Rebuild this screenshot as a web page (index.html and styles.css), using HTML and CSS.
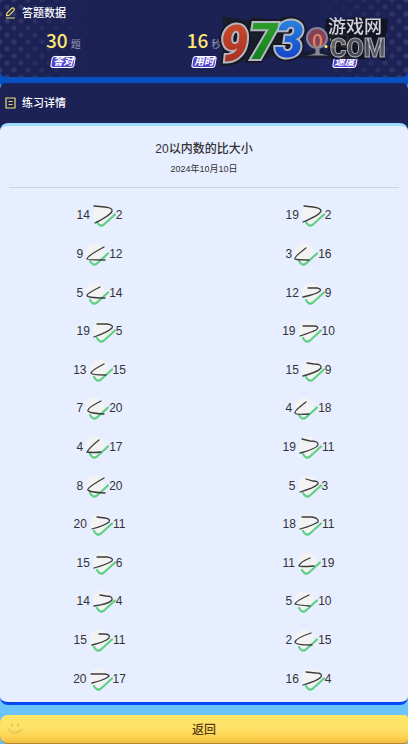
FILE: index.html
```html
<!DOCTYPE html>
<html lang="zh-CN">
<head>
<meta charset="utf-8">
<meta name="viewport" content="width=device-width, initial-scale=1">
<title>练习详情</title>
<link rel="stylesheet" href="styles.css">
</head>
<body>
<svg class="defs" aria-hidden="true">
  <defs>
    <g id="mark">
      <circle cx="12" cy="12" r="9.5" fill="#f3f3f3" stroke="none"/>
      <path d="M7 20 Q10 25.500 14 22.500 L25 12.500" fill="none" stroke="#5fd083" stroke-width="2.200" stroke-linecap="round"/>
    </g>
  </defs>
</svg>

<section class="panel summary">
  <h2 class="heading">
    <svg class="heading-icon" viewBox="0 0 12 12" aria-hidden="true"><path d="M1.500 8.500 L2 6 L7 1 Q8 .5 9 1.500 Q9.700 2.500 9 3.300 L4 8.300 Z M1 11 H10"/></svg>
    答题数据
  </h2>
  <div class="stats">
    <div class="stat"><p class="value">30<span class="unit">题</span></p><span class="badge">答对</span></div>
    <div class="stat"><p class="value">16<span class="unit">秒</span></p><span class="badge">用时</span></div>
    <div class="stat"><p class="value">0.53<span class="unit">秒/题</span></p><span class="badge">速度</span></div>
  </div>
  <svg class="logo" viewBox="0 0 174 58" role="img" aria-label="973游戏网">
    <defs>
      <linearGradient id="red" x1="0" y1="0" x2="0" y2="1"><stop offset="0" stop-color="#e2552c"/><stop offset="1" stop-color="#b02a16"/></linearGradient>
      <linearGradient id="green" x1="0" y1="0" x2="0" y2="1"><stop offset="0" stop-color="#35b52c"/><stop offset="1" stop-color="#078212"/></linearGradient>
      <linearGradient id="blue" x1="0" y1="0" x2="0" y2="1"><stop offset="0" stop-color="#2fa0f0"/><stop offset="1" stop-color="#0c35d0"/></linearGradient>
      <linearGradient id="steel" x1="0" y1="0" x2="1" y2="1"><stop offset="0" stop-color="#77777c"/><stop offset=".5" stop-color="#46464c"/><stop offset="1" stop-color="#77777c"/></linearGradient>
    </defs>
    <path d="M5 4 L30 8 L38 5 L60 8 L66 5 L86 9 L88 20 L83 38 L64 48 L56 43 L36 52 L30 46 L26 50 L12 54 L10 44 Z" fill="#1a1d28"/>
    <path d="M76 46 L86 39 H95 V34 H106 V39 L116 43 V47 Z" fill="#15171f" opacity=".6"/>
    <path d="M109 6 L118 8 L140 5 L171 7 L169 24 L168 49 L154 43 L150 47 L116 47 L111 38 L114 27 L108 23 Z" fill="#11131c"/>
    <g class="digits">
      <g class="digit-edge"><text x="3" y="49">9</text><text x="32" y="47">7</text><text x="58" y="45">3</text></g>
      <g class="digit-rim"><text x="3" y="49">9</text><text x="32" y="47">7</text><text x="58" y="45">3</text></g>
      <text x="3" y="49" fill="url(#red)">9</text><text x="32" y="47" fill="url(#green)">7</text><text x="58" y="45" fill="url(#blue)">3</text>
    </g>
    <path d="M98 36 V41 L88 44 H114 L103 41 V36 Z" fill="#92949c" stroke="#222530"/>
    <circle cx="100" cy="26" r="10" fill="#c8505a" fill-opacity=".7" stroke="#8d909c" stroke-width="2"/>
    <text class="site" x="111" y="21">游戏网</text>
    <text class="domain" x="113" y="45">COM</text>
  </svg>
</section>

<section class="panel details">
  <h2 class="heading">
    <svg class="heading-icon" viewBox="0 0 12 12" aria-hidden="true"><path d="M1 1 H10 V11 H1 Z M3.500 4.500 H7.500 M3.500 7.500 H7.500"/></svg>
    练习详情
  </h2>
</section>

<main class="sheet-wrap">
  <article class="sheet">
    <header class="sheet-head">
      <h1>20以内数的比大小</h1>
      <time datetime="2024-10-10">2024年10月10日</time>
    </header>
    <ol class="answers">
      <li>14<svg class="ink" viewBox="0 0 26 26" role="img" aria-label="大于"><use href="#mark"/><path d="M4 4 L15 5 Q23 6 22 9 Q21 13 5 21"/></svg>2</li>
      <li>19<svg class="ink" viewBox="0 0 26 26" role="img" aria-label="大于"><use href="#mark"/><path d="M5 4 L14 5 Q22 6 22 9 Q21 13 4 20"/></svg>2</li>
      <li>9<svg class="ink" viewBox="0 0 26 26" role="img" aria-label="小于"><use href="#mark"/><path d="M21 6 Q4 15 4 18 Q4 19 22 19"/></svg>12</li>
      <li>3<svg class="ink" viewBox="0 0 26 26" role="img" aria-label="小于"><use href="#mark"/><path d="M14 7 Q2 16 3 18 Q4 19 17 19"/></svg>16</li>
      <li>5<svg class="ink" viewBox="0 0 26 26" role="img" aria-label="小于"><use href="#mark"/><path d="M17 7 Q5 13 4 15 Q3 18 22 18"/></svg>14</li>
      <li>12<svg class="ink" viewBox="0 0 26 26" role="img" aria-label="大于"><use href="#mark"/><path d="M9 8 L18 8 Q23 9 21 11 Q18 14 4 17"/></svg>9</li>
      <li>19<svg class="ink" viewBox="0 0 26 26" role="img" aria-label="大于"><use href="#mark"/><path d="M7 6 L17 6 Q24 7 22 10 Q18 14 4 19"/></svg>5</li>
      <li>19<svg class="ink" viewBox="0 0 26 26" role="img" aria-label="大于"><use href="#mark"/><path d="M7 8 L19 8 Q24 9 20 12 Q16 14 4 18"/></svg>10</li>
      <li>13<svg class="ink" viewBox="0 0 26 26" role="img" aria-label="小于"><use href="#mark"/><path d="M17 7 Q5 13 4 16 Q4 18 19 18"/></svg>15</li>
      <li>15<svg class="ink" viewBox="0 0 26 26" role="img" aria-label="大于"><use href="#mark"/><path d="M8 6 L15 7 Q23 7 22 11 Q19 15 4 19"/></svg>9</li>
      <li>7<svg class="ink" viewBox="0 0 26 26" role="img" aria-label="小于"><use href="#mark"/><path d="M18 6 Q6 12 5 15 Q3 18 21 19"/></svg>20</li>
      <li>4<svg class="ink" viewBox="0 0 26 26" role="img" aria-label="小于"><use href="#mark"/><path d="M14 7 Q2 16 3 18 Q4 20 17 19"/></svg>18</li>
      <li>4<svg class="ink" viewBox="0 0 26 26" role="img" aria-label="小于"><use href="#mark"/><path d="M16 6 Q7 13 4 18 Q10 19 18 18"/></svg>17</li>
      <li>19<svg class="ink" viewBox="0 0 26 26" role="img" aria-label="大于"><use href="#mark"/><path d="M6 5 L14 7 Q23 7 22 11 Q20 15 4 19"/></svg>11</li>
      <li>8<svg class="ink" viewBox="0 0 26 26" role="img" aria-label="小于"><use href="#mark"/><path d="M21 5 Q7 13 5 16 Q3 19 22 20"/></svg>20</li>
      <li>5<svg class="ink" viewBox="0 0 26 26" role="img" aria-label="大于"><use href="#mark"/><path d="M10 6 L17 8 Q23 8 22 11 Q18 15 4 19"/></svg>3</li>
      <li>20<svg class="ink" viewBox="0 0 26 26" role="img" aria-label="大于"><use href="#mark"/><path d="M10 6 L18 7 Q24 8 22 11 Q19 14 5 18"/></svg>11</li>
      <li>18<svg class="ink" viewBox="0 0 26 26" role="img" aria-label="大于"><use href="#mark"/><path d="M6 6 L16 6 Q23 7 22 11 Q18 14 4 18"/></svg>11</li>
      <li>15<svg class="ink" viewBox="0 0 26 26" role="img" aria-label="大于"><use href="#mark"/><path d="M7 7 L17 7 Q24 8 22 11 Q18 14 4 18"/></svg>6</li>
      <li>11<svg class="ink" viewBox="0 0 26 26" role="img" aria-label="小于"><use href="#mark"/><path d="M15 8 Q5 12 4 16 Q4 17 19 16"/></svg>19</li>
      <li>14<svg class="ink" viewBox="0 0 26 26" role="img" aria-label="大于"><use href="#mark"/><path d="M10 7 L16 8 Q23 8 22 12 Q19 16 4 18"/></svg>4</li>
      <li>5<svg class="ink" viewBox="0 0 26 26" role="img" aria-label="小于"><use href="#mark"/><path d="M17 7 Q4 13 3 16 Q5 17 18 18"/></svg>10</li>
      <li>15<svg class="ink" viewBox="0 0 26 26" role="img" aria-label="大于"><use href="#mark"/><path d="M12 7 L17 7 Q24 7 22 11 Q18 15 5 18"/></svg>11</li>
      <li>2<svg class="ink" viewBox="0 0 26 26" role="img" aria-label="小于"><use href="#mark"/><path d="M19 6 Q4 11 3 15 Q3 18 20 18"/></svg>15</li>
      <li>20<svg class="ink" viewBox="0 0 26 26" role="img" aria-label="大于"><use href="#mark"/><path d="M4 8 L18 8 Q24 9 21 11 Q17 14 5 17"/></svg>17</li>
      <li>16<svg class="ink" viewBox="0 0 26 26" role="img" aria-label="大于"><use href="#mark"/><path d="M7 6 L17 7 Q24 7 22 11 Q18 15 4 19"/></svg>4</li>
    </ol>
  </article>
</main>

<footer class="actions">
  <button class="back" type="button">
    <svg class="smile" viewBox="0 0 18 16" aria-hidden="true"><path d="M2 8 Q8 15 16 8 Q12 13 7 12 Q4 11 2 8 Z M6 2 V6 M12 2 V6"/></svg>
    返回
  </button>
</footer>
</body>
</html>
```
FILE: styles.css
```css
* {
  box-sizing: border-box;
}

body {
  margin: 0;
  min-height: 100vh;
  display: flex;
  flex-direction: column;
  background: #6cc3fb;
  color: #333;
  font-family: "Liberation Sans", "Noto Sans CJK SC", sans-serif;
}

h1, h2, p, ol {
  margin: 0;
  padding: 0;
}

.defs {
  position: absolute;
  width: 0;
  height: 0;
}

.panel {
  background: #1c2256;
  color: #fff;
}

.summary {
  position: relative;
  padding: 5px 0 8px;
  border-radius: 0 0 6px 6px;
  box-shadow: 0 12px 0 #0650c0;
}

.summary::before {
  content: "";
  position: absolute;
  inset: 0;
  background-image:
    radial-gradient(circle, #343967 2px, transparent 3px),
    radial-gradient(circle, #343967 2px, transparent 3px);
  background-size: 14px 14px;
  background-position: 0 0, 7px 7px;
  -webkit-mask-image: linear-gradient(90deg, #000, transparent 22%, transparent 78%, #000);
  mask-image: linear-gradient(90deg, #000, transparent 22%, transparent 78%, #000);
}

.heading {
  position: relative;
  display: flex;
  align-items: center;
  gap: 5px;
  padding-left: 5px;
  font-size: 11px;
  line-height: 16px;
  font-weight: 500;
}

.heading-icon {
  width: 12px;
  height: 12px;
  fill: none;
  stroke: #e9dc72;
  stroke-width: 1.200;
}

.stats {
  position: relative;
  display: grid;
  grid-template-columns: repeat(3, 1fr);
  gap: 14px;
  padding-top: 8px;
}

.stat {
  display: flex;
  flex-direction: column;
  align-items: center;
  gap: 2px;
}

.value {
  height: 24px;
  font-family: "Noto Sans CJK SC", sans-serif;
  font-size: 19px;
  line-height: 22px;
  font-weight: 500;
  color: #ffe873;
  white-space: nowrap;
}

.unit {
  margin-left: 3px;
  font-size: 10px;
  line-height: 10px;
  font-weight: 400;
  color: #9699b5;
}

.badge {
  position: relative;
  z-index: 0;
  padding: 0 2px;
  font-size: 10px;
  line-height: 14px;
  font-weight: 700;
  font-style: italic;
  color: #fff;
}

.badge::before {
  content: "";
  position: absolute;
  z-index: -1;
  inset: 1px 0;
  background: #5043d0;
  border: 1px solid #fff;
  border-radius: 3px;
  transform: skewX(-10deg);
}

.logo {
  position: absolute;
  top: 12px;
  right: 17px;
  width: 174px;
  height: 58px;
  overflow: visible;
  opacity: 0.9;
}

.digits {
  font: italic 900 50px Roboto, sans-serif;
}

.digit-edge {
  fill: #16181f;
  stroke: #16181f;
  stroke-width: 8;
}

.digit-rim {
  fill: #c5c7d0;
  stroke: #c5c7d0;
  stroke-width: 4;
}

.site {
  font: 500 18px "Noto Sans CJK SC", sans-serif;
  fill: #e4e5ea;
}

.domain {
  font: 900 25px Roboto, sans-serif;
  fill: url(#steel);
  stroke: #b9bac2;
  stroke-width: 1;
}

.details {
  position: relative;
  margin-top: 6px;
  padding: 12px 0;
  border-radius: 6px 6px 0 0;
}

.sheet-wrap {
  flex: 1;
  display: flex;
  background: linear-gradient(#1c2256 12px, #6cc3fb 12px);
}

.sheet {
  flex: 1;
  display: flex;
  flex-direction: column;
  border-top: 3px solid #9edbff;
  border-bottom: 3px solid #0648f4;
  border-radius: 8px;
  background: #e7eeff;
}

.sheet-head {
  margin: 0 9px;
  padding: 13px 0 8px;
  border-bottom: 1px solid #cdd3dc;
  text-align: center;
}

.sheet-head h1 {
  font-size: 12px;
  line-height: 20px;
  font-weight: 500;
}

.sheet-head time {
  display: block;
  font-size: 9px;
  line-height: 20px;
}

.answers {
  flex: 1;
  display: grid;
  grid-template-columns: 1fr 1fr;
  grid-auto-rows: 1fr;
  column-gap: 10px;
  padding: 8px 0 4px;
  list-style: none;
}

.answers li {
  display: flex;
  align-items: center;
  justify-content: center;
  font-size: 12px;
  line-height: 16px;
}

.ink {
  width: 26px;
  height: 26px;
  fill: none;
  stroke: #3c3c3c;
  stroke-width: 1.300;
  stroke-linecap: round;
}

.actions {
  padding-top: 10px;
}

.back {
  position: relative;
  display: block;
  width: 100%;
  height: 29px;
  padding: 0 0 1px;
  border: 0;
  border-bottom: 1px solid #b58a2c;
  border-radius: 8px 4px 4px 8px;
  background: linear-gradient(#ffe766, #fde26a 45%, #fdd24e 80%, #f0bd45);
  color: #5a3a0c;
  font: 500 12px "Liberation Sans", "Noto Sans CJK SC", sans-serif;
}

.smile {
  position: absolute;
  left: 6px;
  top: 6px;
  width: 18px;
  height: 16px;
  fill: none;
  stroke: #e8cd5a;
  stroke-width: 2;
}
```
